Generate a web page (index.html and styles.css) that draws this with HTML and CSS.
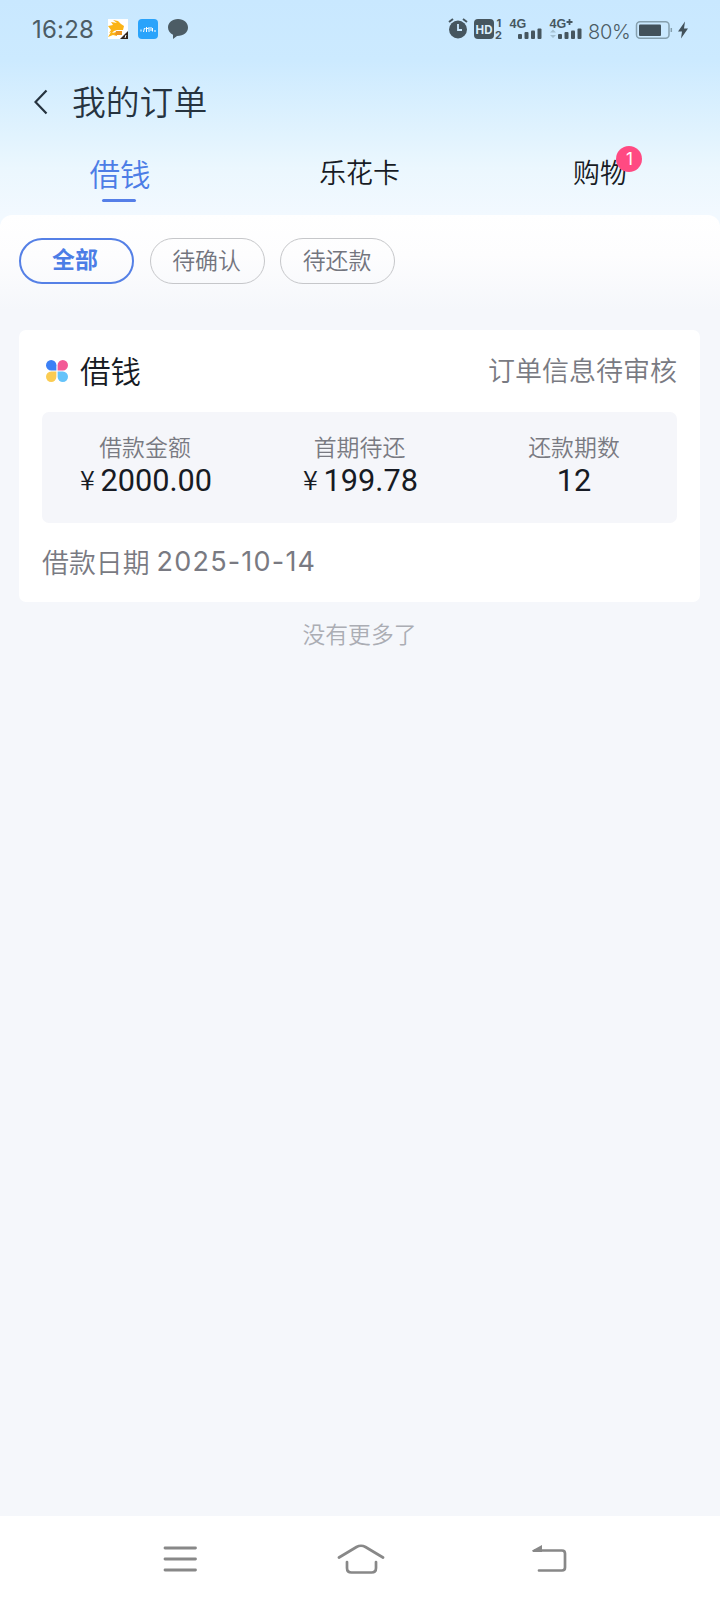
FILE: index.html
```html
<!DOCTYPE html>
<html lang="zh-CN">
<head>
<meta charset="utf-8">
<title>我的订单</title>
<link rel="stylesheet" href="styles.css">
</head>
<body>
<div class="page">
  <header class="top">
    <div class="status">
      <span class="time">16:28</span>
      <svg class="app" width="20" height="20" viewBox="0 0 20 20"><path fill="#fff" d="M0 0h20v20H0z"/><path fill="#fbb416" d="M0 7l5-1L3 3l6 1-4-3 5 1 3 3 3 2-1 4H9l-3 1-2 2 5-1v4l-4-1-5 2 3-5-2 1 2-3z"/><path fill="#ed9620" d="M8 12h6v4H7z"/><path fill="#30251e" d="M20 12v8h-8z"/><path stroke="#fff" d="M17 19l1-3"/></svg>
      <svg class="chat-app" width="20" height="20" viewBox="0 0 20 20"><rect width="20" height="20" rx="4" fill="#2aa3fb"/><path d="M3 12.500v-2M5.500 13l1-4M8.500 8v5M7.500 9.500h3M11 8v5M13 8v4M14.500 9v3.500M17 11v2" fill="none" stroke="#fff" stroke-width="1"/></svg>
      <svg class="bubble" width="20" height="20" viewBox="0 0 20 20"><path fill="#4c5c65" d="M10 0C4 0 0 4 0 8.500c0 3.200 2 6 5 7.300V20l4-3c7 0 11-4 11-8.500S16 0 10 0z"/></svg>
      <span class="grow"></span>
      <svg class="signals" width="134" height="24" viewBox="0 0 134 24">
        <g fill="#46565f">
          <circle cx="10" cy="12.500" r="9"/><path d="M10 7v6h4" fill="none" stroke="#cbe9ff" stroke-width="1.800"/><path d="M1 5l4-3M15 2l4 3" stroke="#46565f" stroke-width="2"/>
          <rect x="26" y="2" width="20" height="20" rx="4"/>
          <text class="hd" x="36" y="16.500" text-anchor="middle" fill="#dceffc">HD</text>
          <text class="sim" x="48.500" y="10">1</text><text class="sim" x="47" y="22">2</text>
          <text class="net" x="61.500" y="11">4G</text><text class="net" x="101.500" y="11">4G</text>
          <path d="M118.500 5h6M121.500 2v6" stroke="#46565f" stroke-width="1.800"/>
          <rect x="70" y="17" width="4" height="5" rx="1"/><rect x="76.500" y="15" width="4" height="7" rx="1"/><rect x="83" y="13.500" width="4" height="8.500" rx="1"/><rect x="89.500" y="11.500" width="4" height="10.500" rx="1"/>
          <rect x="110" y="17" width="4" height="5" rx="1"/><rect x="116.500" y="15" width="4" height="7" rx="1"/><rect x="123" y="13.500" width="4" height="8.500" rx="1"/><rect x="129.500" y="11.500" width="4" height="10.500" rx="1"/>
          <path d="M102 15.500l3-3 3 3zM102 18l3 3 3-3z" fill="#a4c0d1"/>
        </g>
      </svg>
      <span class="percent">80%</span>
      <svg class="battery" width="54" height="20" viewBox="0 0 54 20"><rect x="1.500" y="1.800" width="32.500" height="16.500" rx="3.500" fill="none" stroke="#86a0ae" stroke-width="1.500"/><rect x="4" y="4.500" width="22" height="11.500" rx="1" fill="#42515a"/><path d="M36.300 8v4" stroke="#86a0ae" stroke-width="1.500"/><path d="M50 1.500l-7 10h4l-1 7 7-10h-4z" fill="#42515a"/></svg>
    </div>
    <div class="title-bar">
      <svg width="14" height="26" viewBox="0 0 14 26"><path d="M12.500 1.500L1.500 13l11 11.500" fill="none" stroke="#26333f" stroke-width="2.200"/></svg>
      <h1 class="title">我的订单</h1>
    </div>
    <nav class="tabs">
      <div class="tab tab-active"><span class="active-label">借钱</span></div>
      <div class="tab">乐花卡</div>
      <div class="tab tab-shop"><span class="tab-label">购物<span class="badge">1</span></span></div>
    </nav>
  </header>
  <main class="panel">
    <div class="filters">
      <span class="pill pill-active">全部</span>
      <span class="pill">待确认</span>
      <span class="pill">待还款</span>
    </div>
    <section class="card">
      <div class="card-head">
        <svg width="22" height="22" viewBox="0 0 22 22"><path fill="#3c80f5" d="M5.200 0a5.200 5.200 0 0 1 5.200 5.200v5.200H5.200A5.200 5.200 0 0 1 5.200 0z"/><path fill="#f35a96" d="M16.800 0a5.200 5.200 0 0 0-5.200 5.200v5.200h5.200A5.200 5.200 0 0 0 16.800 0z"/><path fill="#fbcc52" d="M5.200 22a5.200 5.200 0 0 0 5.200-5.200v-5.200H5.200a5.200 5.200 0 0 0 0 10.400z"/><path fill="#65c3fa" d="M16.800 22a5.200 5.200 0 0 1-5.200-5.200v-5.200h5.200a5.200 5.200 0 0 1 0 10.400z"/></svg>
        <h2 class="card-title">借钱</h2>
        <span class="state">订单信息待审核</span>
      </div>
      <div class="summary">
        <div class="cell"><div class="label">借款金额</div><div class="value"><span class="yen">¥</span>2000.00</div></div>
        <div class="cell"><div class="label">首期待还</div><div class="value"><span class="yen">¥</span>199.78</div></div>
        <div class="cell"><div class="label">还款期数</div><div class="value">12</div></div>
      </div>
      <div class="date-row"><span>借款日期</span><span class="date">2025-10-14</span></div>
    </section>
    <p class="end">没有更多了</p>
  </main>
  <footer class="navbar">
    <svg width="34" height="26" viewBox="0 0 34 26"><path d="M2 2h30.500M2 13h30.500M2 24h30.500" stroke="#888" stroke-width="2.800" stroke-linecap="round"/></svg>
    <svg class="home" width="48" height="30" viewBox="0 0 48 30"><path d="M2 13.500L19.500 3Q24 .5 28.500 3L46 13.500M10 18v6q0 4.500 4.500 4.500h20q4.500 0 4.500-4.500v-6" fill="none" stroke="#888" stroke-width="2.700" stroke-linecap="round"/></svg>
    <svg width="35" height="28" viewBox="0 0 35 28"><path d="M3 5.500h27q3 0 3 3V22.500q0 3-3 3H7" fill="none" stroke="#888" stroke-width="2.700" stroke-linecap="round"/><path d="M0 5.500l10-5.500V7H1z" fill="#888"/></svg>
  </footer>
</div>
</body>
</html>
```
FILE: styles.css
```css
* { box-sizing: border-box; }
body {
  margin: 0;
  font-family: "Noto Sans CJK SC", sans-serif;
  font-weight: 350;
  color: #171b24;
}
h1, h2, p { margin: 0; font-weight: inherit; }
svg { display: block; flex: none; }
.page {
  width: 720px;
  height: 1600px;
  display: flex;
  flex-direction: column;
  background: #f5f7fb;
}
.top {
  height: 227px;
  margin-bottom: -12px;
  background: linear-gradient(#c9e8ff 0, #cceaff 60px, #e1f3fe 135px, #ebf7fe 168px, #f2f9ff 215px);
}
.status {
  height: 60px;
  padding: 0 31px 2px 32px;
  display: flex;
  align-items: center;
  color: #4c5c65;
}
.time { width: 76px; padding-top: 1px; font: 400 24px/30px Inter, sans-serif; letter-spacing: .2px; }
.chat-app, .bubble { margin-left: 10px; }
.grow { flex: 1; }
.hd { font: 700 11.5px Inter, sans-serif; }
.sim { font: 700 11px Inter, sans-serif; }
.net { font: 700 12.5px "Liberation Sans", sans-serif; }
.percent { width: 53px; padding: 5px 0 0 6px; font: 300 20px/24px Inter, sans-serif; letter-spacing: -.3px; white-space: nowrap; }
.battery { margin-top: 2px; }
.title-bar {
  height: 84px;
  padding-left: 34px;
  display: flex;
  align-items: center;
  gap: 24px;
}
.title { font-size: 33.8px; line-height: 40px; margin-top: -3px; color: #26333f; }
.tabs { display: grid; grid-template-columns: repeat(3, 240px); }
.tab { height: 58px; padding-right: 1px; font-size: 26.9px; line-height: 55px; text-align: center; }
.tab-shop { padding-right: 0; }
.tab-active {
  display: flex;
  flex-direction: column;
  align-items: center;
  padding-right: 2px;
  font-size: 30.5px;
  color: #4c7de6;
}
.active-label { height: 55px; padding-left: 2px; line-height: 59px; }
.tab-active::after { content: ""; width: 34px; height: 3px; flex: none; border-radius: 2px; background: #557fe8; }
.tab-label { position: relative; display: inline-block; }
.badge {
  position: absolute;
  right: -15.5px;
  top: 2px;
  width: 26px;
  height: 26px;
  border-radius: 50%;
  background: #ff4a82;
  color: #fff;
  font: 400 17px/27px Inter, sans-serif;
}
.panel {
  flex: 1;
  padding: 23px 20px 0 19px;
  border-radius: 12px 12px 0 0;
  background: linear-gradient(#fff 0, #fdfdfe 40px, #f5f7fb 95px);
}
.filters { display: flex; gap: 15.5px; }
.pill {
  width: 115px;
  height: 46px;
  padding-right: 1px;
  border: 1px solid #c6c7ca;
  border-radius: 23px;
  font-size: 22.9px;
  line-height: 41px;
  text-align: center;
  color: #73757e;
}
.pill-active { padding-right: 3px; border: 2px solid #5580e6; line-height: 36px; font-weight: 700; color: #4c7de6; }
.card { height: 272px; margin-top: 46px; padding: 0 23px; border-radius: 7px; background: #fff; }
.card-head { height: 82px; padding-left: 4px; display: flex; align-items: center; }
.card-title { margin: -3px 0 0 12px; font-size: 30.5px; line-height: 40px; }
.state { margin: -2px 0 0 auto; font-size: 27px; line-height: 36px; color: #797a82; }
.summary {
  height: 111px;
  padding-top: 19px;
  border-radius: 7px;
  background: #f5f6fa;
  display: grid;
  grid-template-columns: 206px 1fr 206px;
}
.cell { text-align: center; }
.label { margin-bottom: 2px; font-size: 22.9px; line-height: 30px; color: #797a82; }
.value { font: 380 30.7px/36px Roboto, sans-serif; }
.yen { display: inline-block; width: 22.5px; font: 350 27px/30px "Noto Sans CJK SC", sans-serif; text-align: left; transform: translate(2px, -1px); }
.date-row { display: flex; align-items: center; gap: 7px; height: 76px; font-size: 26.9px; color: #797a82; }
.date { padding-top: 2px; font: 370 27px/36px Inter, sans-serif; letter-spacing: 1.2px; }
.end { margin-top: 15px; font-size: 22.8px; line-height: 33px; text-align: center; color: #abadb4; }
.navbar {
  height: 84px;
  padding: 1px 153px 0 163px;
  background: #fff;
  display: flex;
  align-items: center;
  justify-content: space-between;
}
.home { margin: 0 8px 0 0; }
```
